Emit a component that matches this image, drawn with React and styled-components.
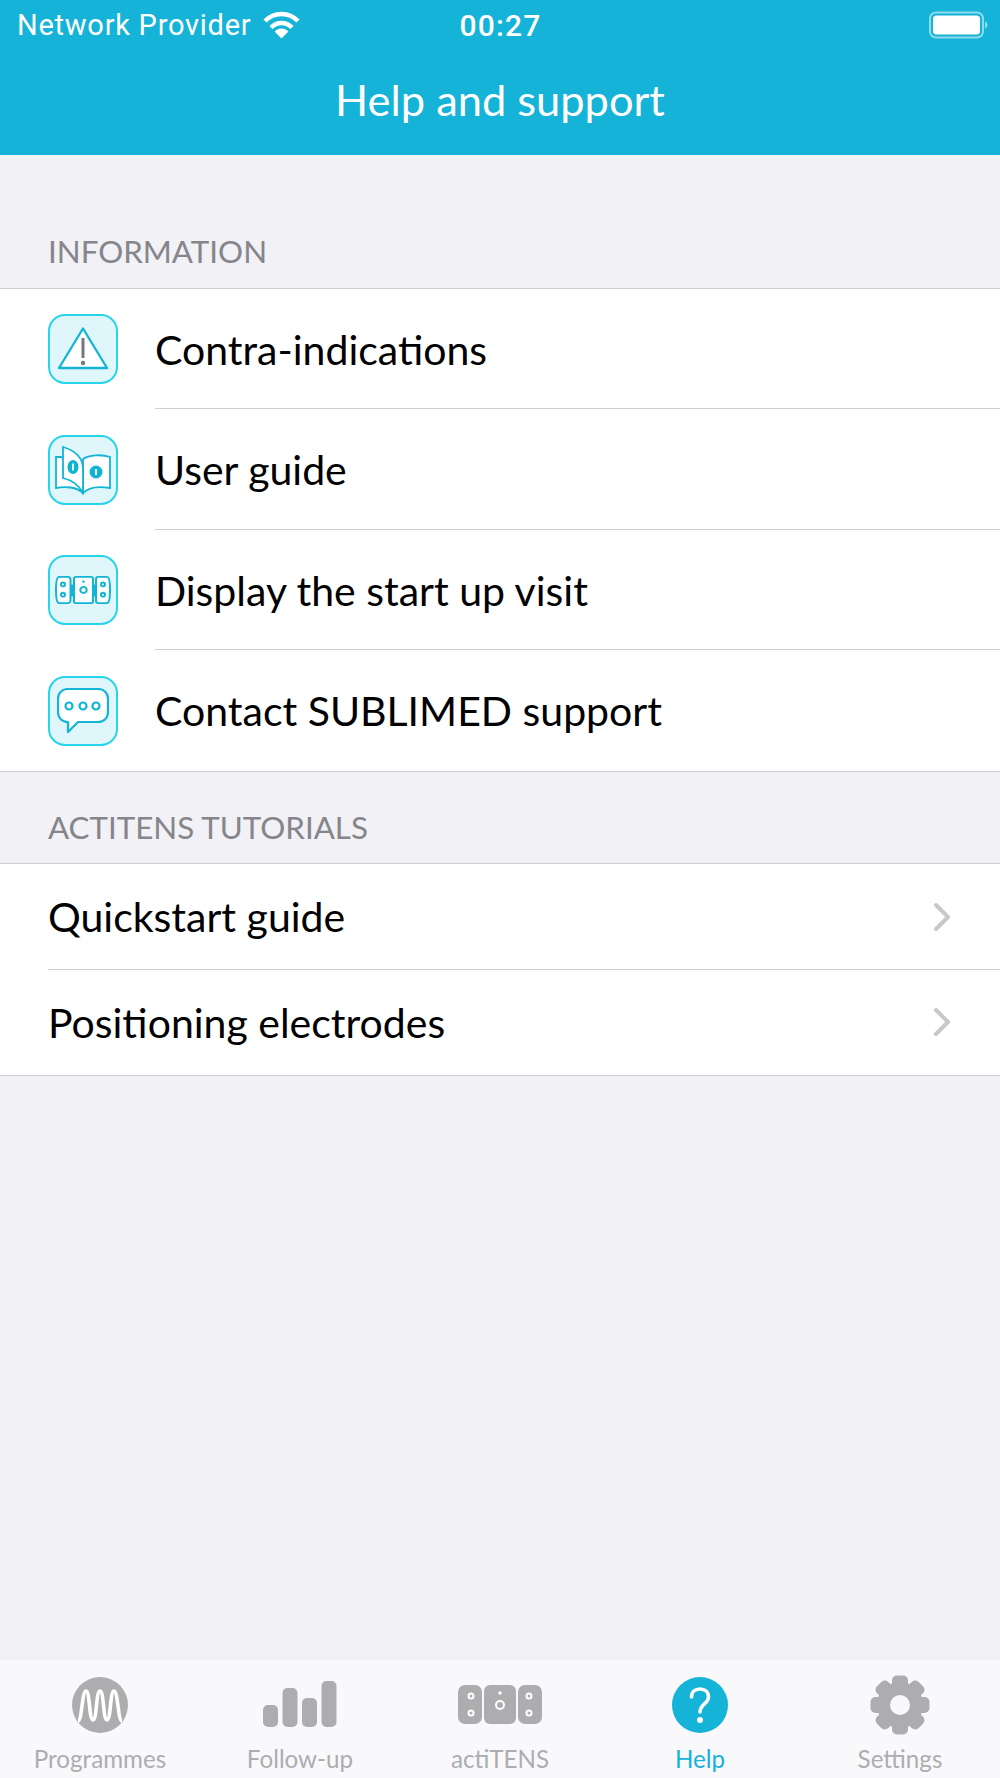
import styled, { createGlobalStyle } from "styled-components"

const Global = createGlobalStyle`
    html, body {
        margin: 0;
        padding: 0;
        background-color: #f1f1f6;
    }
    * {
        box-sizing: border-box;
    }
`

const Screen = styled.div`
    display: flex;
    flex-direction: column;
    width: 1000px;
    height: 1778px;
    overflow: hidden;
    background-color: #f1f1f6;
    font-family: Lato, "Open Sans", sans-serif;
    font-variant-ligatures: common-ligatures;
`

const Header = styled.header`
    flex: none;
    height: 155px;
    background-color: #14b3d7;
    color: white;
`

const StatusBar = styled.div`
    display: grid;
    grid-template-columns: 1fr auto 1fr;
    align-items: center;
    height: 50px;
    padding: 0 12px 0 17px;
    font-family: Roboto, Inter, sans-serif;
    font-size: 29px;
`

const Provider = styled.div`
    display: flex;
    align-items: center;
    gap: 12px;
    letter-spacing: 0.75px;
`

const Clock = styled.div`
    margin-right: 4px;
    font-weight: 500;
    font-size: 30px;
    letter-spacing: 1.2px;
`

const Battery = styled.div`
    justify-self: end;
    display: flex;
    align-items: center;
`

const Title = styled.h1`
    margin: 0;
    padding-top: 23px;
    text-align: center;
    font-size: 43.4px;
    font-weight: 400;
`

const Content = styled.main`
    flex: 1;
`

const SectionLabel = styled.div`
    display: flex;
    align-items: center;
    height: ${({ $height }) => $height}px;
    padding: ${({ $pad }) => $pad}px 0 0 48px;
    color: #85858b;
    font-size: 31.3px;
    text-transform: uppercase;
`

const List = styled.div`
    background-color: white;
    border-top: 1px solid #cfcfd3;
    border-bottom: 1px solid #cfcfd3;
`

const Row = styled.div`
    position: relative;
    display: flex;
    align-items: center;
    height: ${({ $height }) => $height}px;
    padding: 0 49px 0 48px;
    color: black;
    font-size: 41px;

    & + &::before {
        content: "";
        position: absolute;
        top: ${({ $lift }) => -$lift}px;
        right: 0;
        left: ${({ $inset }) => $inset}px;
        height: 1px;
        background-color: #cfcfd3;
    }
`

const IconTile = styled.div`
    flex: none;
    width: 70px;
    height: 70px;
    margin-right: 37px;
    border: 2.5px solid #27d5ea;
    border-radius: 17px;
    background-color: #dff6fb;
    display: flex;
    align-items: center;
    justify-content: center;
`

const RowText = styled.span`
    flex: 1;
`

const TabBar = styled.nav`
    flex: none;
    display: grid;
    grid-template-columns: repeat(5, 200px);
    height: 118px;
    background-color: #f9f9fb;
`

const Tab = styled.div`
    display: flex;
    flex-direction: column;
    align-items: center;
    color: ${({ $active }) => ($active ? "#14b3d7" : "#adadb0")};
`

const TabIcon = styled.div`
    display: flex;
    align-items: center;
    justify-content: center;
    height: 85px;
    padding-top: 5px;
`

const TabLabel = styled.span`
    font-size: 24.2px;
    line-height: 28px;
`

const Wifi = () => (
    <svg width="37" height="28" viewBox="0 0 37 28" fill="none" stroke="white" strokeWidth="4.500">
        <path d="M2 10C11 0.500 26 0.500 35 10" />
        <path d="M8 16.500C14 10.500 23 10.500 29 16.500" />
        <path d="M18.500 27.500L11.500 20.500C15.500 16.500 21.500 16.500 25.500 20.500Z" fill="white" stroke="none" />
    </svg>
)

const BatteryIcon = () => (
    <svg width="59" height="28" viewBox="0 0 59 28">
        <rect x="1" y="1.500" width="53" height="25" rx="6" fill="none" stroke="#8ddcee" strokeWidth="2" />
        <rect x="4" y="4.500" width="47" height="19" rx="3.500" fill="white" />
        <path d="M56 10.500C57.500 11 58.500 12.500 58.500 14C58.500 15.500 57.500 17 56 17.500Z" fill="#8ddcee" />
    </svg>
)

const WarningIcon = () => (
    <svg width="52" height="46" viewBox="0 0 52 46">
        <path d="M26 2.500L50 42H2Z" fill="white" stroke="#12b5d6" strokeWidth="2.300" strokeLinejoin="round" />
        <path d="M26 12V32" stroke="#77787c" strokeWidth="3" />
        <circle cx="26" cy="37" r="2.200" fill="#77787c" />
    </svg>
)

const BookIcon = () => (
    <svg width="56" height="50" viewBox="0 0 56 50" fill="white" stroke="#12b5d6" strokeWidth="1.800">
        <path d="M28 14C34 10 46 9 55 12V43C44 41 34 42 28 48Z" />
        <path d="M6 12H1V43C10 41 22 42 28 48V24Z" />
        <path d="M8 2C18 5 28 11 28 24V48C24 40 16 35 8 33Z" />
        <ellipse cx="18" cy="22" rx="5.500" ry="7" fill="#0fb3d3" stroke="none" />
        <circle cx="41" cy="27" r="6.500" fill="#0fb3d3" stroke="none" />
        <path d="M18 18.500V25.500M41 24V30" stroke="white" strokeWidth="1.800" fill="none" />
    </svg>
)

const DeviceIcon = () => (
    <svg width="56" height="28" viewBox="0 0 56 30" preserveAspectRatio="none" fill="white" stroke="#12b5d6" strokeWidth="2">
        <path d="M4 1H13C15 1 15.500 3 15.500 4V26C15.500 28 14 29 13 29H4C2 29 1 24 1 15C1 6 2 1 4 1Z" />
        <rect x="19" y="1" width="19" height="28" rx="2" />
        <path d="M52 1H43C41 1 41 3 41 4V26C41 28 42 29 43 29H52C54 29 55 24 55 15C55 6 54 1 52 1Z" />
        <path d="M15.500 9H19V22H15.500ZM38 9H41V22H38Z" fill="#12b5d6" stroke="none" />
        <circle cx="8" cy="9" r="2" fill="none" />
        <circle cx="8" cy="20" r="2" fill="none" />
        <circle cx="48" cy="9" r="2" fill="none" />
        <circle cx="48" cy="20" r="2" fill="none" />
        <circle cx="28.500" cy="6" r="1.300" fill="#12b5d6" stroke="none" />
        <circle cx="28.500" cy="15" r="3.200" fill="none" />
    </svg>
)

const ChatIcon = () => (
    <svg width="52" height="46" viewBox="0 0 52 46" fill="white" stroke="#12b5d6" strokeWidth="2.200">
        <path d="M11 1H41C47 1 51 5 51 11V24C51 30 47 34 41 34H21L11 44V34C5 34 1 30 1 24V11C1 5 5 1 11 1Z" strokeLinejoin="round" />
        <circle cx="12" cy="18" r="3.500" />
        <circle cx="26" cy="18" r="3.500" />
        <circle cx="39" cy="18" r="3.500" />
    </svg>
)

const Chevron = () => (
    <svg width="18" height="30" viewBox="0 0 18 30" fill="none" stroke="#c7c7cc" strokeWidth="4" strokeLinecap="round" strokeLinejoin="round">
        <path d="M3 3L15 15L3 27" />
    </svg>
)

const ProgrammesIcon = () => (
    <svg width="56" height="56" viewBox="0 0 56 56">
        <circle cx="28" cy="28" r="28" fill="#adadb0" />
        <path d="M6 44C10 44 10 14 14 14C18 14 17 43 21 43C25 43 24 14 28 14C32 14 31 43 35 43C39 43 38 14 42 14C46 14 46 44 50 44" fill="none" stroke="white" strokeWidth="3.600" />
    </svg>
)

const FollowUpIcon = () => (
    <svg width="74" height="48" viewBox="0 0 74 48" fill="#adadb0">
        <rect x="0" y="24" width="15" height="22" rx="5" />
        <rect x="19.500" y="7" width="15" height="39" rx="5" />
        <rect x="39" y="17" width="15" height="29" rx="5" />
        <rect x="58.500" y="0" width="15" height="46" rx="5" />
    </svg>
)

const ActitensIcon = () => (
    <svg width="84" height="40" viewBox="0 0 84 40">
        <g fill="#adadb0">
            <rect x="0" y="0" width="24" height="39" rx="7" />
            <rect x="26" y="0" width="32" height="39" rx="6" />
            <rect x="60" y="0" width="24" height="39" rx="7" />
        </g>
        <g fill="none" stroke="white" strokeWidth="2">
            <circle cx="13" cy="11" r="2.500" />
            <circle cx="13" cy="28" r="2.500" />
            <circle cx="71" cy="11" r="2.500" />
            <circle cx="71" cy="28" r="2.500" />
            <circle cx="42" cy="20" r="4" />
        </g>
        <circle cx="42" cy="8" r="1.800" fill="white" />
    </svg>
)

const HelpIcon = () => (
    <svg width="56" height="56" viewBox="0 0 56 56">
        <circle cx="28" cy="28" r="28" fill="#14b3d7" />
        <path d="M19.500 20C19.500 15 23 12 28 12C33 12 36.500 15 36.500 20C36.500 27 28 27 28 35" fill="none" stroke="white" strokeWidth="3.500" strokeLinecap="round" />
        <circle cx="28" cy="43" r="3" fill="white" />
    </svg>
)

const SettingsIcon = () => (
    <svg width="60" height="60" viewBox="0 0 60 60">
        <g fill="#adadb0">
            {[0, 45, 90, 135].map((deg) => (
                <rect key={deg} x="22" y="0.500" width="16" height="59" rx="5" transform={`rotate(${deg} 30 30)`} />
            ))}
            <circle cx="30" cy="30" r="23" />
        </g>
        <circle cx="30" cy="30" r="10" fill="#f9f9fb" />
    </svg>
)

const information = [
    { label: "Contra-indications", icon: <WarningIcon /> },
    { label: "User guide", icon: <BookIcon /> },
    { label: "Display the start up visit", icon: <DeviceIcon /> },
    { label: "Contact SUBLIMED support", icon: <ChatIcon /> },
]

const tutorials = ["Quickstart guide", "Positioning electrodes"]

const tabs = [
    { label: "Programmes", icon: <ProgrammesIcon /> },
    { label: "Follow-up", icon: <FollowUpIcon /> },
    { label: "actiTENS", icon: <ActitensIcon /> },
    { label: "Help", icon: <HelpIcon />, active: true },
    { label: "Settings", icon: <SettingsIcon /> },
]

function App() {
    return (
        <Screen>
            <Global />
            <Header>
                <StatusBar>
                    <Provider>Network Provider <Wifi /></Provider>
                    <Clock>00:27</Clock>
                    <Battery><BatteryIcon /></Battery>
                </StatusBar>
                <Title>Help and support</Title>
            </Header>
            <Content>
                <SectionLabel $height={133} $pad={59}>Information</SectionLabel>
                <List>
                    {information.map((item) => (
                        <Row key={item.label} $height={120.5} $inset={155} $lift={1.25}>
                            <IconTile>{item.icon}</IconTile>
                            <RowText>{item.label}</RowText>
                        </Row>
                    ))}
                </List>
                <SectionLabel $height={91} $pad={19}>Actitens tutorials</SectionLabel>
                <List>
                    {tutorials.map((label) => (
                        <Row key={label} $height={105.6} $inset={48} $lift={1}>
                            <RowText>{label}</RowText>
                            <Chevron />
                        </Row>
                    ))}
                </List>
            </Content>
            <TabBar>
                {tabs.map((tab) => (
                    <Tab key={tab.label} $active={tab.active}>
                        <TabIcon>{tab.icon}</TabIcon>
                        <TabLabel>{tab.label}</TabLabel>
                    </Tab>
                ))}
            </TabBar>
        </Screen>
    )
}

export default App
